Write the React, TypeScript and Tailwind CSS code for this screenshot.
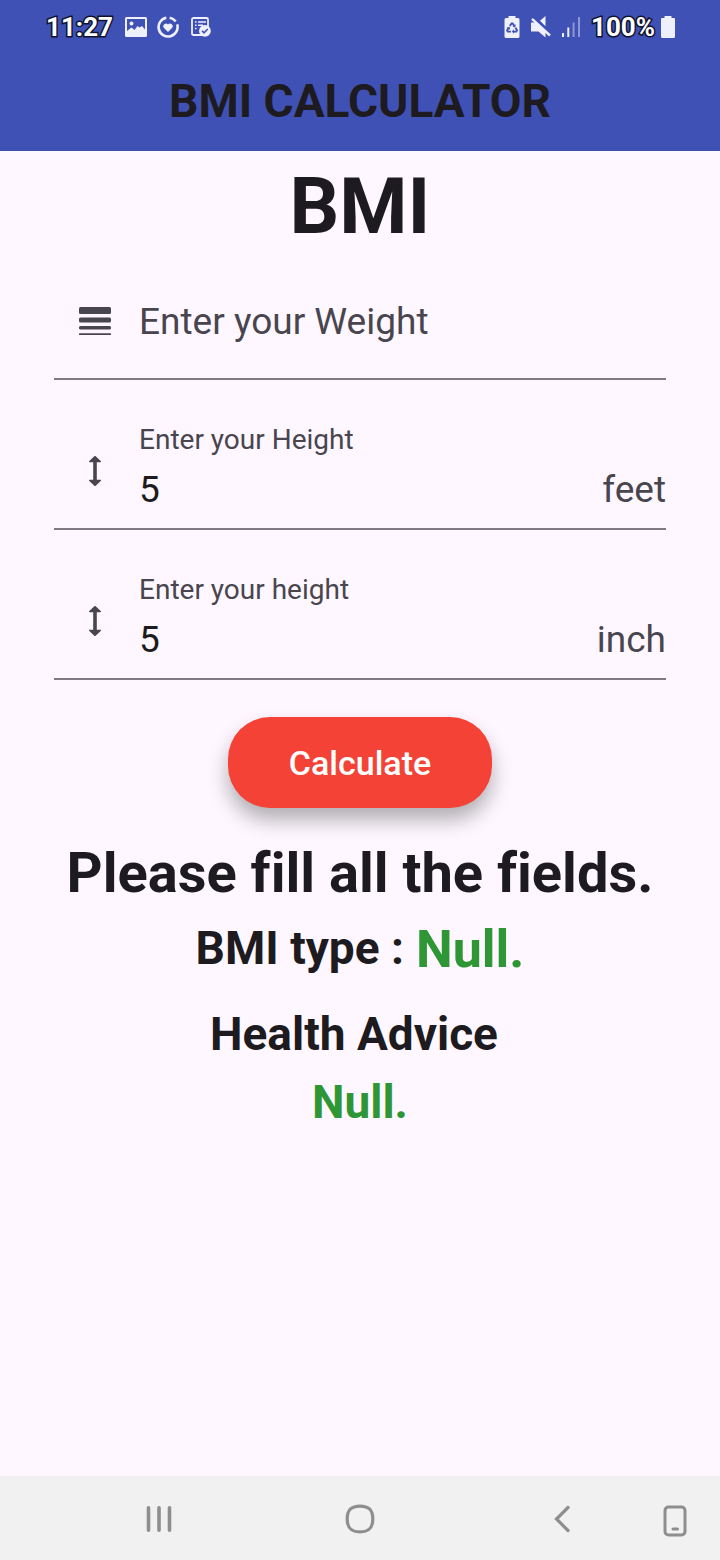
import React, { useState } from "react";

const ImageIcon = () => (
  <svg viewBox="0 0 22 20" className="h-5 w-[22px]" aria-hidden="true">
    <path
      fill="#eef0fb"
      fillRule="evenodd"
      d="M1.500 0h19A1.500 1.500 0 0 1 22 1.500v17a1.500 1.500 0 0 1-1.500 1.500h-19A1.500 1.500 0 0 1 0 18.500v-17A1.500 1.500 0 0 1 1.500 0ZM2 2v12l4.500-3.500 3 2.500 3-4 2 1.500L17 9l3 3.500V2Zm4.500 2.500a2 2 0 1 1 0 4 2 2 0 0 1 0-4Z"
    />
  </svg>
);

const HeartRingIcon = () => (
  <svg viewBox="0 0 22 22" className="size-[22px]" aria-hidden="true">
    <g fill="none" stroke="#eef0fb" strokeWidth="2.600">
      <path d="M12.700 1.700a9.500 9.500 0 0 1 6 3.700" />
      <path d="M20.200 8.300A9.500 9.500 0 1 1 9.300 1.700" />
    </g>
    <path fill="#eef0fb" d="M11 16 7 12a2.600 2.600 0 0 1 4-3.500A2.600 2.600 0 0 1 15 12Z" />
  </svg>
);

const TaskIcon = () => (
  <svg viewBox="0 0 20 20" className="size-5" aria-hidden="true">
    <rect x="1" y="1" width="16" height="17" rx="1.500" fill="none" stroke="#eef0fb" strokeWidth="1.800" />
    <path d="M4 5h1.500M7 5h8M4 8.200h1.500M7 8.200h5M4 11.400h1.500" stroke="#eef0fb" strokeWidth="1.500" />
    <circle cx="13.900" cy="13.900" r="5.900" fill="#eef0fb" />
    <path d="m11 13.800 2 2 3.800-3.800" fill="none" stroke="#3f51b5" strokeWidth="1.600" />
  </svg>
);

const RecycleBatteryIcon = () => (
  <svg viewBox="0 0 16 22" className="h-[22px] w-4" aria-hidden="true">
    <path fill="#eef0fb" d="M4.500 0h7v2H14a1.500 1.500 0 0 1 1.500 1.500v17A1.500 1.500 0 0 1 14 22H2a1.500 1.500 0 0 1-1.500-1.500v-17A1.500 1.500 0 0 1 2 2h2.500Z" />
    <g fill="none" stroke="#3f51b5" strokeWidth="1.900">
      <path d="M5.800 10 7.600 7.400h1L10.400 10" />
      <path d="M11.500 11.800 13 14.300l-.7 1.300H9.300" />
      <path d="M7 15.600H3.800L3.100 14.300l1.500-2.500" />
    </g>
    <path fill="#3f51b5" d="m11.600 8.300-.3 3.400-2.800-1.500ZM10 13.200v4.600l-2.200-2.300ZM2.600 11.800l3.100-1 .4 3Z" />
  </svg>
);

const MutedIcon = () => (
  <svg viewBox="0 0 20 22" className="h-[22px] w-5" aria-hidden="true">
    <path fill="#eef0fb" d="M0 6.500h6L14.500 15v6.500L7.500 15.500H0ZM9 4.800 14.500 0v10.300Z" />
    <path d="m3 2.200 17 16" stroke="#3f51b5" strokeWidth="2" />
    <path d="m1 2.800 18 16.700" stroke="#eef0fb" strokeWidth="2.400" />
  </svg>
);

const SignalIcon = () => (
  <svg viewBox="0 0 18 20" className="h-5 w-[18px]" aria-hidden="true">
    <path fill="#eef0fb" d="M0 16h2v4H0ZM5.300 10.500h2V20h-2Z" />
    <path fill="#8c97d3" d="M10.600 5.500h2V20h-2ZM16 0h2v20h-2Z" />
  </svg>
);

const BatteryIcon = () => (
  <svg viewBox="0 0 14 22" className="h-[22px] w-3.5" aria-hidden="true">
    <path fill="#eef0fb" d="M3.500 0h7v2H13a1 1 0 0 1 1 1v17.500A1.500 1.500 0 0 1 12.500 22h-11A1.500 1.500 0 0 1 0 20.500V3a1 1 0 0 1 1-1h2.500Z" />
  </svg>
);

const WeightIcon = () => (
  <svg viewBox="0 0 32 28" className="h-7 w-8" fill="#49454f" aria-hidden="true">
    <rect width="32" height="7" rx="1.500" />
    <rect y="10.500" width="32" height="5" rx="1.500" />
    <rect y="19" width="32" height="3.500" rx="1.500" />
    <rect y="26.300" width="32" height="1.700" rx=".6" />
  </svg>
);

const HeightIcon = () => (
  <svg viewBox="0 0 12 30" className="h-[30px] w-3" fill="#49454f" aria-hidden="true">
    <path d="M5.300.3a1 1 0 0 1 1.400 0l5 4.700c.6.600.3 1.200-.5 1.200H7.800v17.600h3.400c.8 0 1.100.6.500 1.200l-5 4.700a1 1 0 0 1-1.400 0L.3 25c-.6-.6-.3-1.200.5-1.200h3.400V6.200H.8C0 6.200-.3 5.600.3 5Z" />
  </svg>
);

type FieldProps = {
  id: string;
  label: string;
  icon: React.ReactNode;
  unit?: string;
  initial?: string;
};

function Field({ id, label, icon, unit, initial = "" }: FieldProps) {
  const [value, setValue] = useState(initial);
  const floating = value !== "";
  return (
    <div className="mb-8 flex h-[118px] items-center border-b-2 border-[#7f7a84]">
      <div className="flex w-[82px] shrink-0 justify-center pt-0.5">{icon}</div>
      <div className="relative flex min-w-0 grow flex-col gap-3 pb-1 pl-[3px]">
        <label
          htmlFor={id}
          className={
            floating
              ? "text-[28px] leading-8 text-[#49454f]"
              : "absolute inset-0 flex items-center pt-1 pl-[3px] text-[37px] leading-11 text-[#49454f]"
          }
        >
          {label}
        </label>
        <div className="flex items-center">
          <input
            id={id}
            inputMode="decimal"
            value={value}
            onChange={(e) => setValue(e.target.value)}
            className="w-full min-w-0 grow bg-transparent text-[37px] leading-11 text-[#1d1b20] outline-none"
          />
          {unit && <span className="text-[37px] leading-11 text-[#49454f]">{unit}</span>}
        </div>
      </div>
    </div>
  );
}

export default function App() {
  return (
    <div className="flex min-h-screen flex-col bg-[#fef7ff] font-['Roboto',sans-serif] text-[#1d1b20] [font-variant-ligatures:none]">
      <header className="bg-[#3f51b5]">
        <div className="flex h-[54px] items-center justify-between pr-[45px] pl-[46px] text-[26px] font-bold text-white">
          <div className="flex items-center gap-3">
            <span className="[-webkit-text-stroke:3px_#10122b] [paint-order:stroke_fill]">11:27</span>
            <div className="flex items-center gap-2.5">
              <ImageIcon />
              <HeartRingIcon />
            </div>
            <TaskIcon />
          </div>
          <div className="flex items-center gap-[11px]">
            <RecycleBatteryIcon />
            <MutedIcon />
            <SignalIcon />
            <div className="flex items-center gap-1.5">
              <span className="[-webkit-text-stroke:3px_#10122b] [paint-order:stroke_fill]">100%</span>
              <BatteryIcon />
            </div>
          </div>
        </div>
        <p className="h-[97px] text-center text-[46px] leading-[94px] font-bold">BMI CALCULATOR</p>
      </header>

      <main className="flex grow flex-col px-[54px]">
        <h1 className="py-2 text-center text-[78px] leading-[95px] font-bold">BMI</h1>
        <Field id="weight" label="Enter your Weight" icon={<WeightIcon />} />
        <Field id="feet" label="Enter your Height" icon={<HeightIcon />} unit="feet" initial="5" />
        <Field id="inch" label="Enter your height" icon={<HeightIcon />} unit="inch" initial="5" />

        <button
          type="button"
          className="mt-[5px] h-[91px] self-center rounded-[42px] bg-[#f44336] px-[61px] pt-0.5 text-[34px] font-medium text-white shadow-[0_12px_20px_rgba(0,0,0,0.3)]"
        >
          Calculate
        </button>

        <div className="mt-8 text-center font-bold">
          <p className="text-[56px] leading-[66px]">Please fill all the fields.</p>
          <div className="mt-3 flex items-start justify-center gap-3 text-[46px] leading-[60px]">
            <p>BMI type :</p>
            <p className="text-[52px] leading-[64px] text-[#2e9634]">Null.</p>
          </div>
          <h2 className="mt-5 pr-3 text-[46px] leading-[64px]">Health Advice</h2>
          <p className="mt-1 text-[46px] leading-[64px] text-[#2e9634]">Null.</p>
        </div>
      </main>

      <nav className="flex h-[84px] items-center bg-[#f1f1f1] pt-0.5 text-[#8e8e8e]">
        <div className="grid grow grid-cols-3 justify-items-center pl-[58px]">
          <button type="button" aria-label="Recent apps">
            <svg viewBox="0 0 28 28" className="size-7" fill="none" stroke="currentColor" strokeWidth="3.600" strokeLinecap="round">
              <path d="M3.500 2.800v22.400M14 2.800v22.400M24.500 2.800v22.400" />
            </svg>
          </button>
          <button type="button" aria-label="Home">
            <svg viewBox="0 0 30 30" className="size-[30px]" fill="none" stroke="currentColor" strokeWidth="3.200">
              <path d="M15 2.200c9 0 12.800 3.800 12.800 12.800S24 27.800 15 27.800 2.200 24 2.200 15 6 2.200 15 2.200Z" />
            </svg>
          </button>
          <button type="button" aria-label="Back">
            <svg viewBox="0 0 18 28" className="h-7 w-[18px]" fill="none" stroke="currentColor" strokeWidth="3.200" strokeLinecap="round">
              <path d="M15 2.500 3.500 14 15 25.500" />
            </svg>
          </button>
        </div>
        <button type="button" aria-label="Rotate screen" className="pt-1 pr-[33px]">
          <svg viewBox="0 0 24 32" className="h-8 w-6" fill="none" stroke="currentColor" strokeWidth="3" strokeLinecap="round">
            <rect x="2" y="2" width="20" height="28" rx="3.500" />
            <path d="M10 24h4.500" />
          </svg>
        </button>
      </nav>
    </div>
  );
}
